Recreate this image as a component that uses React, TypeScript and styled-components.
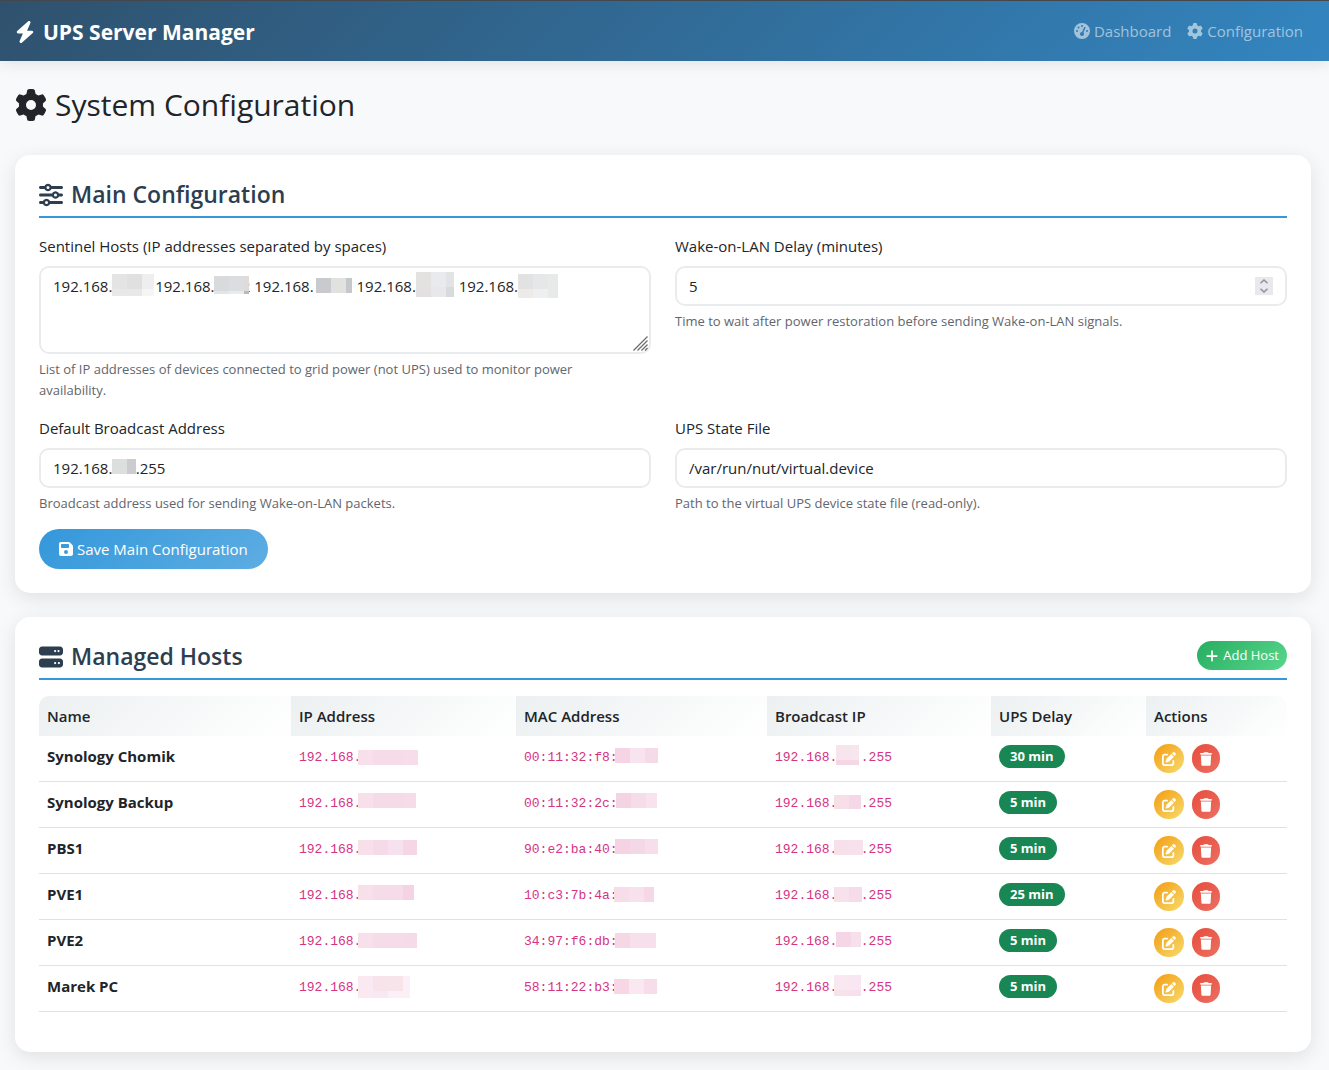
import React, { useState } from "react";
import styled, { createGlobalStyle, css } from "styled-components";
import {
  FaBolt,
  FaFloppyDisk,
  FaGaugeHigh,
  FaGear,
  FaPenToSquare,
  FaPlus,
  FaServer,
  FaSliders,
  FaTrash,
} from "react-icons/fa6";

const GlobalStyle = createGlobalStyle`
  *, *::before, *::after { box-sizing: border-box; }
  body {
    margin: 0;
    background: #f8f9fb;
    color: #212529;
    font-family: "Segoe UI", "Open Sans", "Noto Sans", sans-serif;
    font-size: 15px;
    line-height: 24px;
  }
  button, input, textarea { font: inherit; color: inherit; }
`;

/* ---------- top bar ---------- */

const TopBar = styled.header`
  display: flex;
  align-items: center;
  justify-content: space-between;
  padding: 15px 26px 15px 15px;
  border-top: 1px solid #44474c;
  background: linear-gradient(135deg, #2f516d, #3385c0);
  box-shadow: 0 2px 15px rgba(0, 0, 0, 0.1);
`;

const Brand = styled.a`
  display: flex;
  align-items: center;
  gap: 8px;
  padding-top: 2px;
  color: #fff;
  font-size: 21px;
  font-weight: 700;
  line-height: 28px;
  text-decoration: none;

  svg {
    width: 20px;
    height: 22px;
  }
`;

const Nav = styled.nav`
  display: flex;
  gap: 16px;
`;

const NavLink = styled.a`
  display: flex;
  align-items: center;
  gap: 4px;
  color: rgba(255, 255, 255, 0.55);
  text-decoration: none;

  svg {
    width: 16px;
    height: 16px;
  }
`;

/* ---------- page ---------- */

const Page = styled.main`
  display: flex;
  flex-direction: column;
  gap: 24px;
  padding: 24px 18px 18px 15px;
`;

const PageTitle = styled.h1`
  display: flex;
  align-items: center;
  gap: 8px;
  margin: 0 0 6px;
  font-size: 30px;
  font-weight: 400;
  line-height: 40px;

  svg {
    width: 32px;
    height: 32px;
  }
`;

const Card = styled.section`
  padding: 24px;
  border-radius: 15px;
  background: #fff;
  box-shadow: 0 5px 20px rgba(0, 0, 0, 0.1);
`;

const CardHead = styled.div`
  display: flex;
  align-items: flex-start;
  justify-content: space-between;
  margin-bottom: 16px;
  padding-bottom: 6px;
  border-bottom: 2px solid #3498db;
`;

const CardTitle = styled.h2`
  display: flex;
  align-items: center;
  gap: 8px;
  margin: 0;
  color: #2c3e50;
  font-size: 23px;
  font-weight: 600;
  line-height: 31px;

  svg {
    width: 24px;
    height: 24px;
  }
`;

/* ---------- form ---------- */

const FormGrid = styled.div`
  display: grid;
  grid-template-columns: 1fr 1fr;
  gap: 15px 24px;
  margin-bottom: 15px;
`;

const Label = styled.label`
  display: block;
  margin-bottom: 8px;
`;

const Control = styled.div`
  position: relative;
  display: flex;
`;

const field = css`
  width: 100%;
  margin: 0;
  padding: 6px 12px;
  border: 2px solid #e9ecef;
  border-radius: 10px;
  outline: none;
  background: #fff;

  &:focus {
    border-color: #3498db;
  }
`;

const TextInput = styled.input`
  ${field}
  height: 40px;
  appearance: textfield;

  &::-webkit-inner-spin-button {
    display: none;
  }
`;

const TextArea = styled.textarea`
  ${field}
  resize: vertical;

  &::-webkit-resizer {
    display: none;
  }
`;

const Help = styled.p`
  margin: 5px 0 0;
  padding-right: 12px;
  color: #5f666d;
  font-size: 13px;
  line-height: 21px;
`;

const Grip = styled.svg`
  position: absolute;
  right: 3px;
  bottom: 3px;
  width: 15px;
  height: 15px;
  pointer-events: none;
`;

const Spinner = styled.div`
  position: absolute;
  top: 11px;
  right: 14px;
  display: flex;
  flex-direction: column;
  width: 18px;
  background: #e9e9ed;
`;

const SpinButton = styled.button`
  display: flex;
  align-items: center;
  justify-content: center;
  height: 9px;
  padding: 0;
  border: 0;
  background: none;
`;

/* ---------- buttons ---------- */

const tones = {
  blue: "linear-gradient(135deg, #3498db, #5dade2)",
  green: "linear-gradient(135deg, #27ae60, #58d68d)",
  amber: "linear-gradient(135deg, #f39c12, #f7dc6f)",
  red: "linear-gradient(135deg, #e74c3c, #ec7063)",
};

const Button = styled.button<{ $tone: keyof typeof tones; $small?: boolean }>`
  display: inline-flex;
  align-items: center;
  gap: 4px;
  padding: ${(p) => (p.$small ? "4px 8px" : "8px 20px")};
  border: 0;
  border-radius: 25px;
  background: ${(p) => tones[p.$tone]};
  color: #fff;
  font-size: ${(p) => (p.$small ? "13px" : "15px")};
  line-height: ${(p) => (p.$small ? "21px" : "24px")};
  cursor: pointer;

  svg {
    width: 14px;
    height: ${(p) => (p.$small ? "14px" : "16px")};
  }
`;

const Actions = styled.div`
  display: flex;
  gap: 8px;
`;

const RoundButton = styled(Button)<{ $glyph: number }>`
  height: 29px;
  padding: 4px 8px;

  svg {
    width: ${(p) => p.$glyph}px;
  }
`;

/* ---------- hosts table ---------- */

const Table = styled.table`
  width: 100%;
  margin-bottom: 16px;
  border-spacing: 0;
  table-layout: fixed;
`;

const Col = styled.col<{ $width: number }>`
  width: ${(p) => p.$width}px;
`;

const HeadCell = styled.th`
  padding: 8px;
  background: linear-gradient(135deg, #ecf0f1, #fff);
  font-weight: 600;
  text-align: left;

  &:first-child {
    border-top-left-radius: 10px;
  }
  &:last-child {
    border-top-right-radius: 10px;
  }
`;

const Cell = styled.td`
  height: 46px;
  padding: 8px;
  border-bottom: 1px solid #dee2e6;
  vertical-align: top;
`;

const Name = styled.strong`
  font-weight: 700;
`;

const Code = styled.code`
  position: relative;
  display: block;
  color: #d63384;
  font-family: Consolas, "Liberation Mono", monospace;
  font-size: 13px;
  line-height: 28px;
  white-space: pre;
`;

const Badge = styled.span`
  display: inline-block;
  margin-top: 1px;
  padding: 0 11px;
  border-radius: 12px;
  background: #198754;
  color: #fff;
  font-size: 13px;
  font-weight: 700;
  line-height: 23px;
  vertical-align: top;
`;

/* ---------- privacy mask: a coarse mosaic laid over part of an address ---------- */

type Mask = { x: number; y: number; w: number; h: number; tiles: string[][] };

const TILE = 15;

const MaskBox = styled.span<{ $mask: Mask }>`
  position: absolute;
  left: ${(p) => p.$mask.x}px;
  top: ${(p) => p.$mask.y}px;
  display: grid;
  grid-template-columns: repeat(${(p) => p.$mask.tiles[0].length}, ${TILE}px);
  grid-auto-rows: ${TILE}px;
  width: ${(p) => p.$mask.w}px;
  height: ${(p) => p.$mask.h}px;
  overflow: hidden;
  pointer-events: none;
`;

const Tile = styled.span<{ $color: string }>`
  background: ${(p) => p.$color};
`;

function Mosaic({ mask }: { mask: Mask }) {
  return (
    <MaskBox $mask={mask} aria-hidden="true">
      {mask.tiles.flat().map((color, i) => (
        <Tile key={i} $color={color} />
      ))}
    </MaskBox>
  );
}

const m = (x: number, y: number, w: number, h: number, ...rows: string[]): Mask => ({
  x,
  y,
  w,
  h,
  tiles: rows.map((r) => r.split(" ").map((c) => `#${c}`)),
});

/* ---------- data ---------- */

const gap = (n: number) => " ".repeat(n);

const SENTINELS = ["192.168.", gap(11), "192.168.", gap(7), "2 192.168.", gap(11), "192.168.", gap(11), "192.168."].join("");

const SENTINEL_MASKS = [
  m(73, 8, 42, 22, "e4e4e4 e0e0e0 eeeeee", "e8e8e8 e8e8e8 f5f5f5"),
  m(175, 10, 35, 18, "d9dadb dcdde0 dfdbdb", "e4e6e6 e8ebef bbb9b9"),
  m(277, 12, 36, 15, "c9cace e1e2df c4c8cb"),
  m(377, 6, 38, 25, "e4e2e1 e9eaed e2e3e5", "e2e0e1 e8e8ea d8dbde"),
  m(479, 8, 40, 24, "e3e2e2 e6e7e9 e8eae9", "edebea eeeff1 e8eae9"),
];

const BROADCAST_MASK = m(73, 11, 24, 15, "dddfde cbcbd0");

const HOSTS = [
  {
    name: "Synology Chomik",
    mac: "00:11:32:f8:",
    delay: 30,
    ipMask: m(59, 6, 60, 15, "f8e0ea f6dce8 f6dce8 f7dde9"),
    macMask: m(91, 4, 43, 15, "f5d5e5 f8e4ee f5dae8"),
    castMask: m(61, 1, 23, 20, "f8e4ed f8e6ef", "f4d6e4 f4d8e6"),
  },
  {
    name: "Synology Backup",
    mac: "00:11:32:2c:",
    delay: 5,
    ipMask: m(59, 3, 58, 15, "f7e0ea f5dbe8 f5dbe8 f6dce8"),
    macMask: m(92, 3, 41, 15, "f4d3e3 f6dce7 f8e2ee"),
    castMask: m(59, 5, 27, 14, "f6dfe8 f5d8e7"),
  },
  {
    name: "PBS1",
    mac: "90:e2:ba:40:",
    delay: 5,
    ipMask: m(59, 4, 59, 15, "f7e0ea f5dbe8 f6e2ee f5d6e5"),
    macMask: m(91, 3, 43, 15, "f5d3e3 f5d8e7 f6dfea"),
    castMask: m(59, 4, 29, 15, "f7e0ea f7e1ec"),
  },
  {
    name: "PVE1",
    mac: "10:c3:7b:4a:",
    delay: 25,
    ipMask: m(59, 3, 56, 15, "f7e0ea f5dce8 f5dce8 f5d3e4"),
    macMask: m(90, 5, 40, 15, "f7dce9 f7e2ec f6d7e6"),
    castMask: m(59, 5, 28, 15, "f7e1ea f6dcea"),
  },
  {
    name: "PVE2",
    mac: "34:97:f6:db:",
    delay: 5,
    ipMask: m(59, 5, 59, 15, "f7e0ea f6dce8 f6dce8 f5dae8"),
    macMask: m(91, 5, 41, 15, "f6d8e4 f7e0ec f7e0ec"),
    castMask: m(61, 4, 25, 15, "f5d6e6 f7dfec"),
  },
  {
    name: "Marek PC",
    mac: "58:11:22:b3:",
    delay: 5,
    ipMask: m(59, 2, 52, 22, "fae9f0 f7e3ea f7e3ea fbf0f7", "fae9f0 f9e8f0 fbf0f6 fbf0f6"),
    macMask: m(90, 5, 43, 15, "f7d6e6 f9e8f0 f6dde9"),
    castMask: m(59, 1, 27, 21, "f9e8ef f8e6f2", "f7e1eb f7e0ec"),
  },
];

const COLUMNS = [
  { title: "Name", width: 252 },
  { title: "IP Address", width: 225 },
  { title: "MAC Address", width: 251 },
  { title: "Broadcast IP", width: 224 },
  { title: "UPS Delay", width: 155 },
  { title: "Actions", width: 141 },
];

/* ---------- sections ---------- */

function MainConfiguration() {
  const [delay, setDelay] = useState(5);
  return (
    <Card>
      <CardHead>
        <CardTitle>
          <FaSliders />
          Main Configuration
        </CardTitle>
      </CardHead>
      <form onSubmit={(e) => e.preventDefault()}>
        <FormGrid>
          <div>
            <Label htmlFor="sentinels">Sentinel Hosts (IP addresses separated by spaces)</Label>
            <Control>
              <TextArea id="sentinels" rows={3} defaultValue={SENTINELS} spellCheck={false} />
              {SENTINEL_MASKS.map((mask) => (
                <Mosaic key={mask.x} mask={mask} />
              ))}
              <Grip viewBox="0 0 15 15" fill="none" stroke="#6d6d6d" strokeWidth="1.3">
                <path d="M0.5 14.5L14.5 0.5M4.5 14.5L14.5 4.5M8.5 14.5L14.5 8.5M12 14.5L14.5 12" />
              </Grip>
            </Control>
            <Help>
              List of IP addresses of devices connected to grid power (not UPS) used to monitor power availability.
            </Help>
          </div>
          <div>
            <Label htmlFor="wol-delay">Wake-on-LAN Delay (minutes)</Label>
            <Control>
              <TextInput
                id="wol-delay"
                type="number"
                value={delay}
                onChange={(e) => setDelay(Number(e.target.value))}
              />
              <Spinner>
                <SpinButton type="button" aria-label="Increase delay" onClick={() => setDelay(delay + 1)}>
                  <svg width="8" height="5" viewBox="0 0 8 5" fill="none" stroke="#8f8f9d" strokeWidth="1.5">
                    <path d="M0.5 4.2L4 1L7.5 4.2" />
                  </svg>
                </SpinButton>
                <SpinButton type="button" aria-label="Decrease delay" onClick={() => setDelay(delay - 1)}>
                  <svg width="8" height="5" viewBox="0 0 8 5" fill="none" stroke="#8f8f9d" strokeWidth="1.5">
                    <path d="M0.5 0.8L4 4L7.5 0.8" />
                  </svg>
                </SpinButton>
              </Spinner>
            </Control>
            <Help>Time to wait after power restoration before sending Wake-on-LAN signals.</Help>
          </div>
          <div>
            <Label htmlFor="broadcast">Default Broadcast Address</Label>
            <Control>
              <TextInput id="broadcast" type="text" defaultValue={`192.168.${gap(6)}.255`} />
              <Mosaic mask={BROADCAST_MASK} />
            </Control>
            <Help>Broadcast address used for sending Wake-on-LAN packets.</Help>
          </div>
          <div>
            <Label htmlFor="state-file">UPS State File</Label>
            <Control>
              <TextInput id="state-file" type="text" readOnly value="/var/run/nut/virtual.device" />
            </Control>
            <Help>Path to the virtual UPS device state file (read-only).</Help>
          </div>
        </FormGrid>
        <Button type="submit" $tone="blue">
          <FaFloppyDisk />
          Save Main Configuration
        </Button>
      </form>
    </Card>
  );
}

function ManagedHosts() {
  return (
    <Card>
      <CardHead>
        <CardTitle>
          <FaServer />
          Managed Hosts
        </CardTitle>
        <Button type="button" $tone="green" $small>
          <FaPlus />
          Add Host
        </Button>
      </CardHead>
      <Table>
        <colgroup>
          {COLUMNS.map((c) => (
            <Col key={c.title} $width={c.width} />
          ))}
        </colgroup>
        <thead>
          <tr>
            {COLUMNS.map((c) => (
              <HeadCell key={c.title} scope="col">
                {c.title}
              </HeadCell>
            ))}
          </tr>
        </thead>
        <tbody>
          {HOSTS.map((host) => (
            <tr key={host.name}>
              <Cell>
                <Name>{host.name}</Name>
              </Cell>
              <Cell>
                <Code>
                  192.168.
                  <Mosaic mask={host.ipMask} />
                </Code>
              </Cell>
              <Cell>
                <Code>
                  {host.mac}
                  <Mosaic mask={host.macMask} />
                </Code>
              </Cell>
              <Cell>
                <Code>
                  {`192.168.${gap(3)}.255`}
                  <Mosaic mask={host.castMask} />
                </Code>
              </Cell>
              <Cell>
                <Badge>{host.delay} min</Badge>
              </Cell>
              <Cell>
                <Actions>
                  <RoundButton type="button" $tone="amber" $small $glyph={14} aria-label={`Edit ${host.name}`}>
                    <FaPenToSquare />
                  </RoundButton>
                  <RoundButton type="button" $tone="red" $small $glyph={12} aria-label={`Delete ${host.name}`}>
                    <FaTrash />
                  </RoundButton>
                </Actions>
              </Cell>
            </tr>
          ))}
        </tbody>
      </Table>
    </Card>
  );
}

export default function App() {
  return (
    <>
      <GlobalStyle />
      <TopBar>
        <Brand href="#">
          <FaBolt />
          UPS Server Manager
        </Brand>
        <Nav>
          <NavLink href="#dashboard">
            <FaGaugeHigh />
            Dashboard
          </NavLink>
          <NavLink href="#configuration">
            <FaGear />
            Configuration
          </NavLink>
        </Nav>
      </TopBar>
      <Page>
        <PageTitle>
          <FaGear />
          System Configuration
        </PageTitle>
        <MainConfiguration />
        <ManagedHosts />
      </Page>
    </>
  );
}
